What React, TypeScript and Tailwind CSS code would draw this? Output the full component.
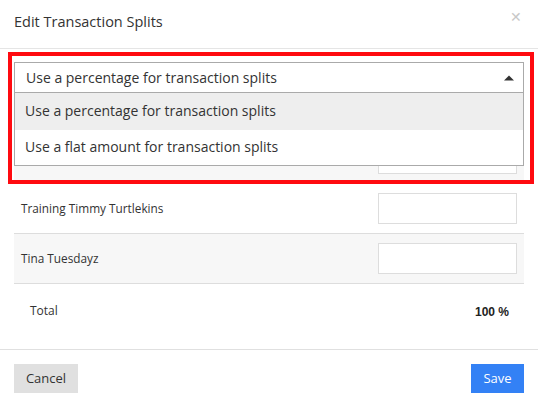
import React from "react";

export default function App() {
  const rows = [
    { name: "", bg: "bg-[#f7f7f7]" },
    { name: "Training Timmy Turtlekins", bg: "bg-white" },
    { name: "Tina Tuesdayz", bg: "bg-[#f7f7f7]" },
  ];
  return (
    <div
      className="relative w-[538px] h-[406px] bg-white text-[#333] overflow-hidden"
      style={{ fontFamily: '"Open Sans", "Noto Sans", sans-serif' }}
    >
      {/* Header */}
      <div className="h-[49px] border-b border-[#e5e5e5] flex items-center justify-between pl-[14px] pr-[16px]">
        <div className="text-[14.5px] leading-none text-[#333] -mt-[3px]">Edit Transaction Splits</div>
        <div className="text-[#c8c8c8] text-[14px] leading-none -mt-[14px]">✕</div>
      </div>

      {/* Body */}
      <div className="px-[14px] pt-[13px]">
        <div className="relative mb-[41px]">
          <div className="h-[31px] border border-[#aaa] flex items-center justify-between pl-[11px] pr-[9px] bg-white">
            <span className="text-[14px] leading-none">Use a percentage for transaction splits</span>
            <svg width="10" height="6" viewBox="0 0 10 6">
              <path d="M0 5.5 L5 0.5 L10 5.5 Z" fill="#333" />
            </svg>
          </div>
          <div className="absolute left-0 right-0 top-full z-10 bg-white border border-t-0 border-[#aaa]">
            <div className="h-[37px] bg-[#eee] flex items-center pl-[10px] text-[14px] -mb-[1px] pb-[2px]">
              Use a percentage for transaction splits
            </div>
            <div className="h-[36px] flex items-center pl-[10px] text-[14px] pb-[1px]">
              Use a flat amount for transaction splits
            </div>
          </div>
        </div>

        <div className="flex flex-col">
          {rows.map((r, i) => (
            <div
              key={i}
              className={`h-[50px] ${r.bg} border-b border-[#ddd] flex items-center justify-between pl-[7px] pr-[7px]`}
            >
              <span className="text-[11.8px]">{r.name}</span>
              <div className="w-[139px] h-[31px] bg-white border border-[#ddd]" />
            </div>
          ))}
          <div className="h-[52px] flex items-center justify-between pl-[16px] pr-[15px] -mt-[1px]">
            <span className="text-[12px] mt-[3px]">Total</span>
            <span
              className="text-[12px] font-bold text-[#222] mt-[5px]"
              style={{ fontFamily: '"Liberation Sans", Arial, sans-serif' }}
            >
              100 %
            </span>
          </div>
        </div>
      </div>

      {/* Footer */}
      <div className="mt-[14px] border-t border-[#e0e0e0] pt-[14px] px-[14px] flex justify-between">
        <button className="w-[64px] h-[29px] bg-[#e0e0e0] text-[#333] text-[13px]">Cancel</button>
        <button className="w-[53px] h-[29px] bg-[#3381f5] text-white text-[13px]">Save</button>
      </div>

      {/* Red annotation box */}
      <div className="absolute left-[8px] top-[52px] w-[526px] h-[132px] border-[4px] border-[#ff0a10] pointer-events-none z-20" />
    </div>
  );
}
